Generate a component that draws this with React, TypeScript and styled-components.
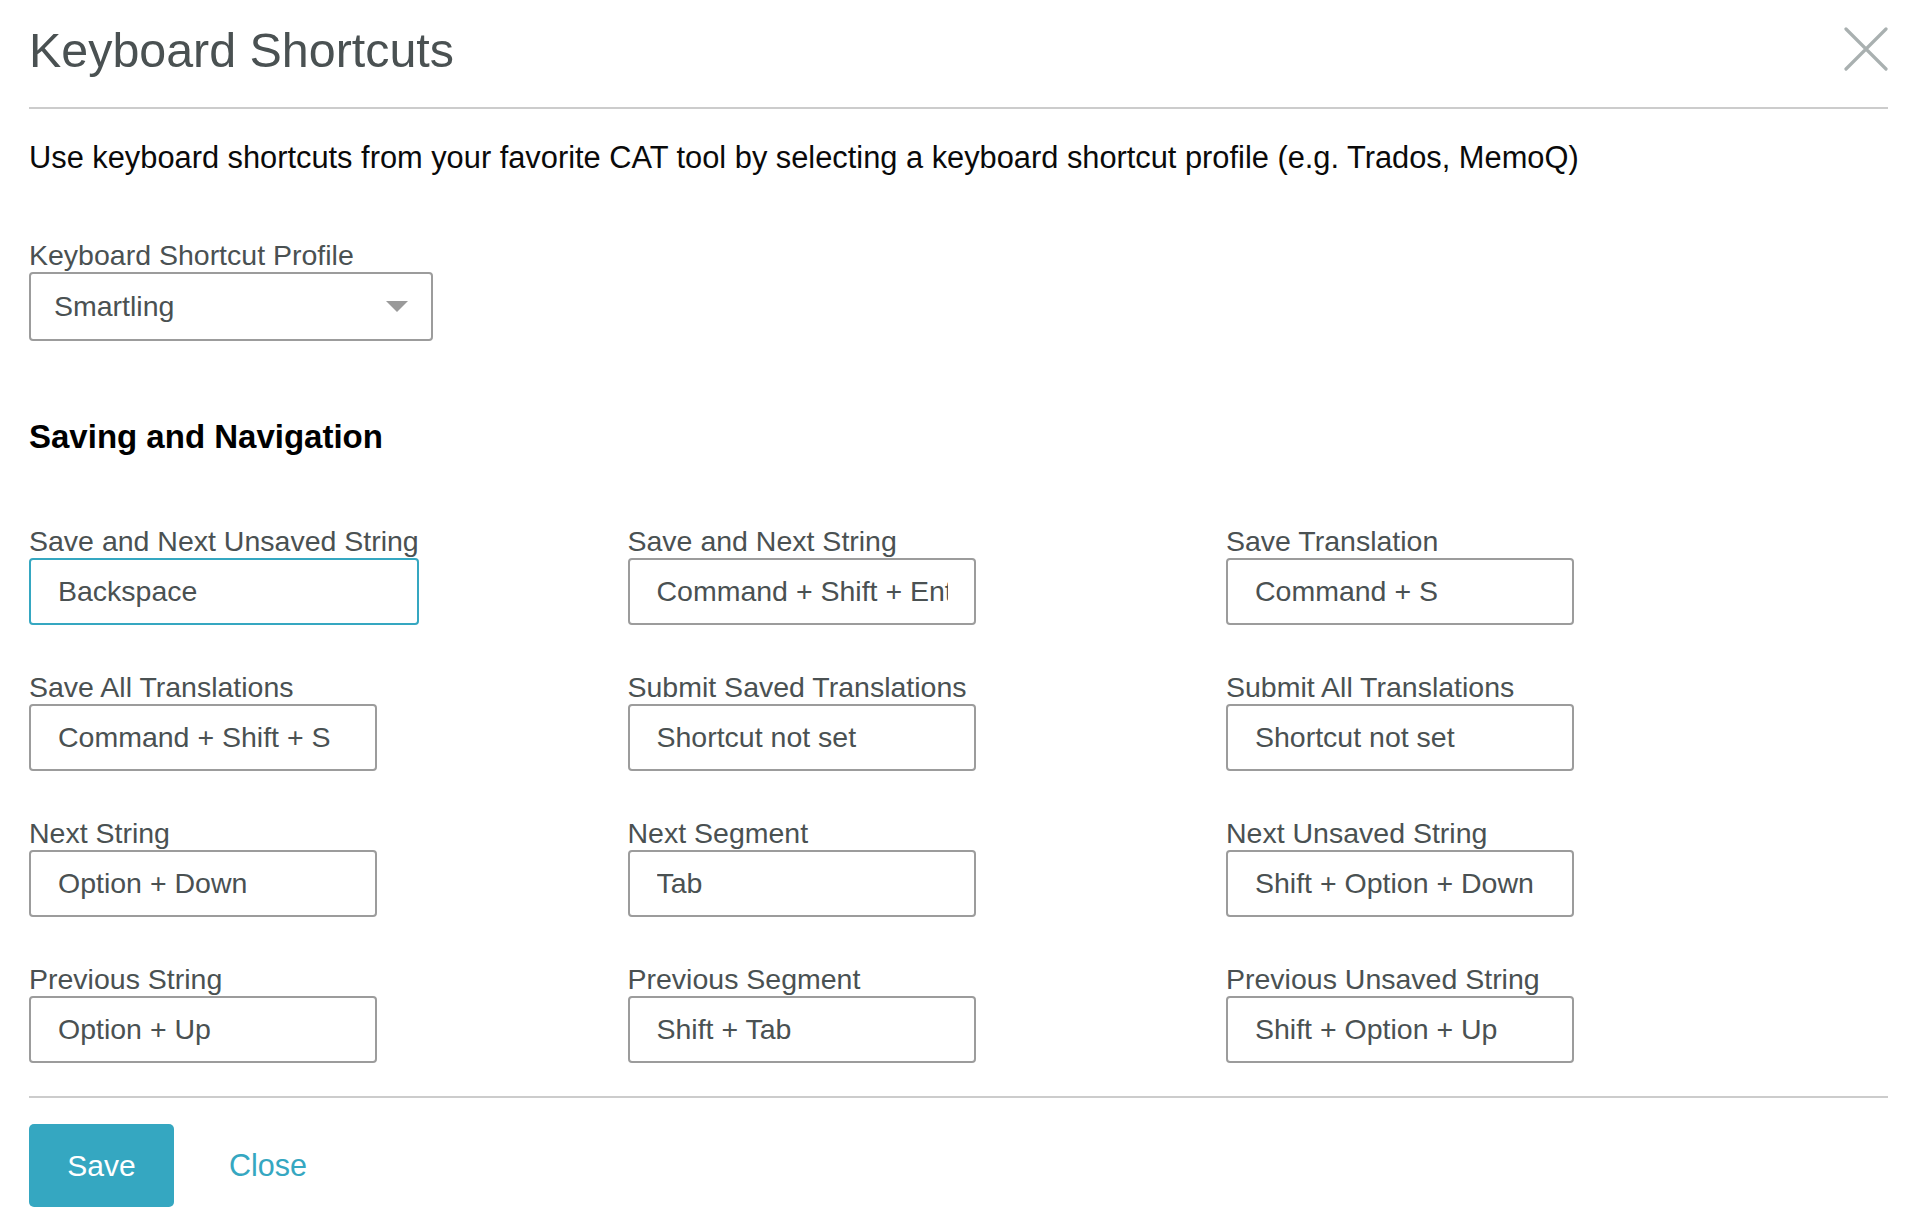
import React from "react";
import styled, { createGlobalStyle } from "styled-components";

const GlobalStyle = createGlobalStyle`
  html, body {
    margin: 0;
    padding: 0;
    background: #ffffff;
  }
  body {
    font-family: "Liberation Sans", Arial, Helvetica, sans-serif;
  }
  * { box-sizing: border-box; }
`;

const TEAL = "#35a7c1";
const SLATE = "#4a5152";

const Dialog = styled.div`
  width: 1922px;
  padding: 0 34px 0 29px;
  display: flex;
  flex-direction: column;
`;

const Header = styled.header`
  display: flex;
  align-items: flex-start;
  justify-content: space-between;
  padding-top: 23px;
  padding-bottom: 29px;
  border-bottom: 2px solid #cccccc;
`;

const Title = styled.h1`
  margin: 0;
  font-size: 48.4px;
  font-weight: 400;
  line-height: 55px;
  color: ${SLATE};
`;

const CloseIcon = styled.button`
  margin: 4px 0 0 0;
  padding: 0;
  border: 0;
  background: none;
  width: 44px;
  height: 44px;
  cursor: pointer;
  display: flex;
`;

const Description = styled.p`
  margin: 31px 0 0 0;
  font-size: 30.8px;
  line-height: 35px;
  color: #0a0a0a;
`;

const ProfileField = styled.div`
  margin-top: 64px;
  display: flex;
  flex-direction: column;
  align-items: flex-start;
`;

const Label = styled.label`
  font-size: 28.5px;
  line-height: 33px;
  color: ${SLATE};
  white-space: nowrap;
`;

const SelectBox = styled.div`
  width: 404px;
  height: 69px;
  border: 2px solid #9c9c9c;
  border-radius: 4px;
  display: flex;
  align-items: center;
  justify-content: space-between;
  padding: 0 23px 0 23px;
  font-size: 28.5px;
  color: ${SLATE};
  cursor: pointer;
`;

const SectionTitle = styled.h2`
  margin: 77px 0 0 0;
  font-size: 33px;
  font-weight: 700;
  line-height: 38px;
  color: #000000;
`;

const Grid = styled.div`
  margin-top: 69px;
  display: grid;
  grid-template-columns: repeat(3, 598.5px);
  row-gap: 46px;
`;

const Field = styled.div`
  justify-self: start;
  display: inline-flex;
  flex-direction: column;
  min-width: 348px;
`;

const ShortcutInput = styled.input<{ $focused?: boolean }>`
  width: 100%;
  min-width: 0;
  height: 67px;
  margin: 0;
  border: 2px solid ${(p) => (p.$focused ? TEAL : "#9c9c9c")};
  border-radius: 4px;
  padding: 0 26px 0 27px;
  font-family: "Liberation Sans", Arial, Helvetica, sans-serif;
  font-size: 28.5px;
  color: ${SLATE};
  background: #ffffff;
  outline: none;
`;

const Footer = styled.footer`
  margin-top: 33px;
  border-top: 2px solid #cccccc;
  padding-top: 26px;
  display: flex;
  align-items: center;
  gap: 55px;
`;

const SaveButton = styled.button`
  width: 145px;
  height: 83px;
  border: 0;
  border-radius: 5px;
  background: ${TEAL};
  color: #ffffff;
  font-family: "Liberation Sans", Arial, Helvetica, sans-serif;
  font-size: 30px;
  cursor: pointer;
`;

const CloseLink = styled.button`
  border: 0;
  background: none;
  padding: 0;
  color: ${TEAL};
  font-family: "Liberation Sans", Arial, Helvetica, sans-serif;
  font-size: 30.5px;
  cursor: pointer;
`;

type Shortcut = { label: string; value: string; focused?: boolean };

const shortcuts: Shortcut[] = [
  { label: "Save and Next Unsaved String", value: "Backspace", focused: true },
  { label: "Save and Next String", value: "Command + Shift + Enter" },
  { label: "Save Translation", value: "Command + S" },
  { label: "Save All Translations", value: "Command + Shift + S" },
  { label: "Submit Saved Translations", value: "Shortcut not set" },
  { label: "Submit All Translations", value: "Shortcut not set" },
  { label: "Next String", value: "Option + Down" },
  { label: "Next Segment", value: "Tab" },
  { label: "Next Unsaved String", value: "Shift + Option + Down" },
  { label: "Previous String", value: "Option + Up" },
  { label: "Previous Segment", value: "Shift + Tab" },
  { label: "Previous Unsaved String", value: "Shift + Option + Up" },
];

export default function App() {
  return (
    <>
      <GlobalStyle />
      <Dialog>
        <Header>
          <Title>Keyboard Shortcuts</Title>
          <CloseIcon aria-label="Close">
            <svg width="44" height="44" viewBox="0 0 44 44">
              <path
                d="M2 2 L42 42 M42 2 L2 42"
                stroke="#a9b0b0"
                strokeWidth="3.2"
                strokeLinecap="round"
                fill="none"
              />
            </svg>
          </CloseIcon>
        </Header>
        <Description>
          Use keyboard shortcuts from your favorite CAT tool by selecting a keyboard shortcut
          profile (e.g. Trados, MemoQ)
        </Description>
        <ProfileField>
          <Label>Keyboard Shortcut Profile</Label>
          <SelectBox>
            <span>Smartling</span>
            <svg width="22" height="11" viewBox="0 0 22 11">
              <path d="M0 0 L22 0 L11 11 Z" fill="#9a9a9a" />
            </svg>
          </SelectBox>
        </ProfileField>
        <SectionTitle>Saving and Navigation</SectionTitle>
        <Grid>
          {shortcuts.map((s) => (
            <Field key={s.label}>
              <Label>{s.label}</Label>
              <ShortcutInput $focused={s.focused} value={s.value} size={1} readOnly />
            </Field>
          ))}
        </Grid>
        <Footer>
          <SaveButton>Save</SaveButton>
          <CloseLink>Close</CloseLink>
        </Footer>
      </Dialog>
    </>
  );
}
